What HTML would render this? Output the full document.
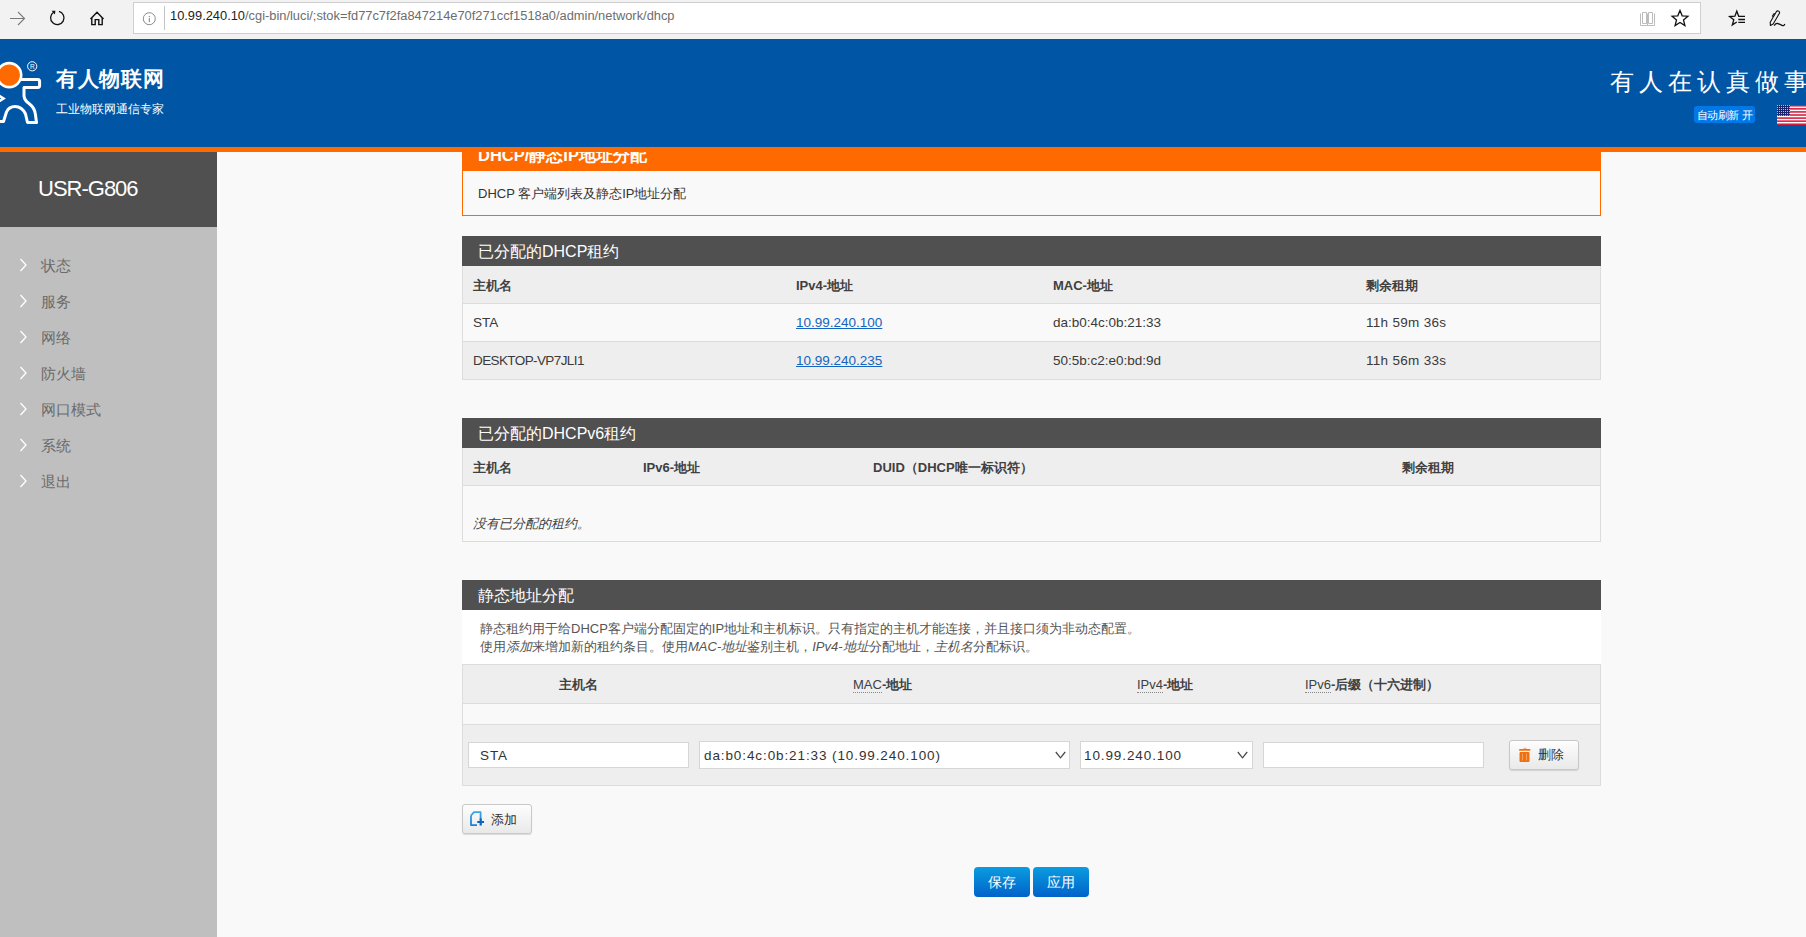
<!DOCTYPE html>
<html><head><meta charset="utf-8">
<style>
*{box-sizing:border-box}
html,body{margin:0;padding:0;width:1806px;height:937px;overflow:hidden;background:#f9f9f9;font-family:"Liberation Sans",sans-serif;color:#404040}
.a{position:absolute}
#tb{z-index:10;left:0;top:0;width:1806px;height:39px;background:#f2f2f2}
#addr{z-index:11;left:133px;top:2px;width:1568px;height:32px;background:#fff;border:1px solid #cfcfcf}
#url{z-index:12;left:170px;top:7.5px;font-size:12.85px;color:#6d6d6d;white-space:nowrap;line-height:15px}
#url b{font-weight:normal;color:#222}
#hdr{z-index:10;left:0;top:39px;width:1806px;height:108px;background:#0055a5}
#oline{z-index:10;left:0;top:147px;width:1806px;height:5px;background:#ff6a00}
#side1{left:0;top:152px;width:217px;height:75px;background:#505050}
#side2{left:0;top:227px;width:217px;height:710px;background:#bfbfbf}
.mi{left:41px;font-size:15px;color:#6b6b6b;line-height:18px;white-space:nowrap;margin-top:1px}
.chev{left:19px;width:8px;height:13px}
.bar{left:462px;width:1139px;height:30px;background:#505050;color:#fff;font-size:16px;line-height:32px;padding-left:16px;white-space:nowrap}
.th{background:#eeeeee}
.cell{font-size:13px;line-height:16px;white-space:nowrap}
.bold{font-weight:bold;color:#404040}
.r{font-size:13.5px;color:#3a3a3a}
.val{font-size:13.5px;letter-spacing:0.9px;color:#333}
.lnk{color:#1565c0;text-decoration:underline}
.hl{background:#dcdcdc}
.inp{background:#fff;border:1px solid #d6d6d6}
.btn{border:1px solid #c8c8c8;border-radius:3px;background:linear-gradient(#fdfdfd,#e9e9e9);box-shadow:0 1px 1px rgba(0,0,0,.12)}
.bbtn{border-radius:4px;background:linear-gradient(#0b9ce0,#0062c9);color:#fff;font-size:14px;line-height:30px;text-align:center}
</style></head><body>
<!-- toolbar -->
<div id="tb" class="a"></div>
<div id="addr" class="a"></div>
<svg class="a" style="left:0;top:0;z-index:12" width="133" height="39" viewBox="0 0 133 39">
<g fill="none" stroke="#7a7a7a" stroke-width="1.1"><path d="M10 18.5H24.5M18 12L24.5 18.5L18 25"/></g>
<g fill="none" stroke="#111" stroke-width="1.3"><path d="M53.6 12.3A6.7 6.7 0 1 0 59 11.4"/></g>
<path d="M51.6 10.8L55.4 10.8L54.9 14.6Z" fill="#111"/>
<g fill="none" stroke="#111" stroke-width="1.4" stroke-linejoin="miter"><path d="M90.5 19L97 12.2L103.5 19M91.8 17.8V24.6H95.2V19.6H98.8V24.6H102.2V17.8"/></g>
<circle cx="149.3" cy="18.7" r="6" fill="none" stroke="#888" stroke-width="1"/>
</svg>
<svg class="a" style="left:140px;top:3px;z-index:12" width="30" height="32"><circle cx="9.3" cy="15.7" r="6" fill="none" stroke="#8a8a8a" stroke-width="1"/><rect x="8.8" y="15" width="1.1" height="4.2" fill="#8a8a8a"/><rect x="8.8" y="12.9" width="1.1" height="1.2" fill="#8a8a8a"/><rect x="24" y="3" width="1" height="24" fill="#c4c4c4"/></svg>
<svg class="a" style="left:1630px;top:0;z-index:12" width="176" height="39">
<g fill="none" stroke="#bcbcbc" stroke-width="1"><path d="M10.5 13.5V25.5H24.5V13.5 M17.5 13.5V25.5 M12.5 12.5H16.5V23.5H12.5Z M18.5 12.5H22.5V23.5H18.5Z"/></g>
<path d="M50.0 10.5 L52.2 15.8 L57.9 16.2 L53.5 19.9 L54.9 25.5 L50.0 22.5 L45.1 25.5 L46.5 19.9 L42.1 16.2 L47.8 15.8Z" fill="none" stroke="#111" stroke-width="1.3" stroke-linejoin="miter"/>
<path d="M108.2 16.2 L108.7 16.2 M108.7 16.2 L106.8 11.2 L104.9 16.2 L99.6 16.5 L103.8 19.8 L102.3 24.9 L106.8 22.0" fill="none" stroke="#111" stroke-width="1.3" stroke-linejoin="miter"/>
<path d="M108.3 16.3H115M108.3 19.5H115M108.3 22.4H115" stroke="#111" stroke-width="1.3"/>
<g transform="translate(140.4 25.4) rotate(30)" fill="none" stroke="#111" stroke-width="1.1" stroke-linejoin="round">
<path d="M0 0L-1.7 -2.6V-14.8A1.7 1.7 0 0 1 1.7 -14.8V-2.6Z"/><path d="M-1.7 -12.5L-2.8 -11.8V-8.5"/>
</g>
<path d="M144.2 25.6Q146 22.8 148 23.6T152 25.4T154.8 24" fill="none" stroke="#111" stroke-width="1.2"/>
</svg>
<div id="url" class="a"><b>10.99.240.10</b>/cgi-bin/luci/;stok=fd77c7f2fa847214e70f271ccf1518a0/admin/network/dhcp</div>

<!-- header -->
<div id="hdr" class="a"></div>
<div id="oline" class="a"></div>
<svg class="a" style="left:0;top:55px;z-index:12" width="45" height="75" viewBox="0 55 45 75">
<path d="M20 79.6H37.8Q39.6 79.8 39.6 81.6V85.8Q39.6 87.4 38 87.4H24V96Q24.5 100.5 29 103.5Q35 108 35.5 115L36.5 122.5H27.5L25.5 114Q22 106.5 15 106.5Q9 106.5 6.5 112L3.5 121.5H-3" fill="none" stroke="#fff" stroke-width="3" stroke-linejoin="round"/>
<circle cx="9.2" cy="75.1" r="12" fill="#ff6a00" stroke="#fff" stroke-width="2.6"/>
<path d="M-2 95L3.5 98.5L-2 102" fill="none" stroke="#fff" stroke-width="2.6"/>
<circle cx="32.2" cy="66.3" r="4.6" fill="none" stroke="#fff" stroke-width="1"/>
<text x="32.3" y="68.6" font-size="6.5" fill="#fff" text-anchor="middle" font-family="Liberation Sans">R</text>
</svg>
<div class="a" style="left:56px;top:67px;z-index:12;font-size:21px;font-weight:bold;color:#fff;line-height:24px;white-space:nowrap;letter-spacing:0.7px">有人物联网</div>
<div class="a" style="left:56px;top:101px;z-index:12;font-size:11.8px;color:#fff;line-height:16px;white-space:nowrap;letter-spacing:0px">工业物联网通信专家</div>
<div class="a" style="left:1610px;top:68px;z-index:12;font-size:24px;color:#fff;line-height:28px;white-space:nowrap;letter-spacing:5px">有人在认真做事</div>
<div class="a" style="left:1694px;top:106px;z-index:12;width:61px;height:17px;background:#0078e7;border-radius:3px;color:#fff;font-size:11px;line-height:19.5px;letter-spacing:-0.5px;text-align:center;white-space:nowrap">自动刷新 开</div>
<svg class="a" style="left:1777px;top:105px;z-index:12" width="29" height="20">
<defs><pattern id="st" width="2" height="2" patternUnits="userSpaceOnUse"><rect width="2" height="2" fill="#1c2470"/><rect width="1" height="1" fill="#b4bcdc"/></pattern></defs>
<rect width="29" height="20" fill="#fbfbfb"/><rect y="0.00" width="29" height="1.54" fill="#d61a3c"/><rect y="3.08" width="29" height="1.54" fill="#d61a3c"/><rect y="6.15" width="29" height="1.54" fill="#d61a3c"/><rect y="9.23" width="29" height="1.54" fill="#d61a3c"/><rect y="12.31" width="29" height="1.54" fill="#d61a3c"/><rect y="15.38" width="29" height="1.54" fill="#d61a3c"/><rect y="18.46" width="29" height="1.54" fill="#d61a3c"/>
<rect width="13" height="10.7" fill="url(#st)"/>
</svg>

<!-- sidebar -->
<div id="side1" class="a"></div>
<div id="side2" class="a"></div>
<div class="a" style="left:38px;top:176px;font-size:22px;color:#fff;line-height:26px;letter-spacing:-1px">USR-G806</div>
<svg class="a" style="left:19px;top:258px" width="9" height="14"><path d="M1.5 1L7 7L1.5 13" fill="none" stroke="#fff" stroke-width="1.3"/></svg>
<div class="a mi" style="top:256px">状态</div>
<svg class="a" style="left:19px;top:294px" width="9" height="14"><path d="M1.5 1L7 7L1.5 13" fill="none" stroke="#fff" stroke-width="1.3"/></svg>
<div class="a mi" style="top:292px">服务</div>
<svg class="a" style="left:19px;top:330px" width="9" height="14"><path d="M1.5 1L7 7L1.5 13" fill="none" stroke="#fff" stroke-width="1.3"/></svg>
<div class="a mi" style="top:328px">网络</div>
<svg class="a" style="left:19px;top:366px" width="9" height="14"><path d="M1.5 1L7 7L1.5 13" fill="none" stroke="#fff" stroke-width="1.3"/></svg>
<div class="a mi" style="top:364px">防火墙</div>
<svg class="a" style="left:19px;top:402px" width="9" height="14"><path d="M1.5 1L7 7L1.5 13" fill="none" stroke="#fff" stroke-width="1.3"/></svg>
<div class="a mi" style="top:400px">网口模式</div>
<svg class="a" style="left:19px;top:438px" width="9" height="14"><path d="M1.5 1L7 7L1.5 13" fill="none" stroke="#fff" stroke-width="1.3"/></svg>
<div class="a mi" style="top:436px">系统</div>
<svg class="a" style="left:19px;top:474px" width="9" height="14"><path d="M1.5 1L7 7L1.5 13" fill="none" stroke="#fff" stroke-width="1.3"/></svg>
<div class="a mi" style="top:472px">退出</div>


<!-- content -->
<div class="a" style="left:462px;top:140px;width:1139px;height:31px;background:#ff6a00"></div>
<div class="a" style="left:478px;top:144.5px;font-size:16.5px;font-weight:bold;color:#fff;line-height:20px;white-space:nowrap">DHCP/静态IP地址分配</div>
<div class="a" style="left:462px;top:171px;width:1139px;height:45px;border:1px solid #ff6a00;border-top:none"></div>
<div class="a cell" style="left:478px;top:186px;color:#333">DHCP 客户端列表及静态IP地址分配</div>

<div class="a bar" style="top:236px">已分配的DHCP租约</div>
<div class="a th" style="left:462px;top:266px;width:1139px;height:38px;border:1px solid #dcdcdc;border-top:none"></div>
<div class="a" style="left:462px;top:304px;width:1139px;height:38px;background:#f9f9f9;border:1px solid #dcdcdc;border-top:none"></div>
<div class="a th" style="left:462px;top:342px;width:1139px;height:38px;border:1px solid #dcdcdc;border-top:none"></div>
<div class="a cell bold" style="left:473px;top:278px">主机名</div>
<div class="a cell bold" style="left:796px;top:278px">IPv4-地址</div>
<div class="a cell bold" style="left:1053px;top:278px">MAC-地址</div>
<div class="a cell bold" style="left:1366px;top:278px">剩余租期</div>
<div class="a cell r" style="left:473px;top:315px">STA</div>
<div class="a cell r lnk" style="left:796px;top:315px">10.99.240.100</div>
<div class="a cell r" style="left:1053px;top:315px">da:b0:4c:0b:21:33</div>
<div class="a cell r" style="left:1366px;top:315px;letter-spacing:0.3px">11h 59m 36s</div>
<div class="a cell r" style="left:473px;top:353px;letter-spacing:-0.6px">DESKTOP-VP7JLI1</div>
<div class="a cell r lnk" style="left:796px;top:353px">10.99.240.235</div>
<div class="a cell r" style="left:1053px;top:353px">50:5b:c2:e0:bd:9d</div>
<div class="a cell r" style="left:1366px;top:353px;letter-spacing:0.3px">11h 56m 33s</div>

<div class="a bar" style="top:418px">已分配的DHCPv6租约</div>
<div class="a th" style="left:462px;top:448px;width:1139px;height:38px;border:1px solid #dcdcdc;border-top:none"></div>
<div class="a" style="left:462px;top:486px;width:1139px;height:56px;background:#f9f9f9;border:1px solid #dcdcdc;border-top:none"></div>
<div class="a cell bold" style="left:473px;top:460px">主机名</div>
<div class="a cell bold" style="left:643px;top:460px">IPv6-地址</div>
<div class="a cell bold" style="left:873px;top:460px">DUID（DHCP唯一标识符）</div>
<div class="a cell bold" style="left:1402px;top:460px">剩余租期</div>
<div class="a cell" style="left:473px;top:516px;font-style:italic">没有已分配的租约。</div>

<div class="a bar" style="top:580px">静态地址分配</div>
<div class="a" style="left:462px;top:610px;width:1139px;height:54px;background:#fff"></div>
<div class="a cell" style="left:480px;top:620px;line-height:18px;color:#555">静态租约用于给DHCP客户端分配固定的IP地址和主机标识。只有指定的主机才能连接，并且接口须为非动态配置。<br>使用<i>添加</i>来增加新的租约条目。使用<i>MAC-地址</i>鉴别主机，<i>IPv4-地址</i>分配地址，<i>主机名</i>分配标识。</div>
<div class="a th" style="left:462px;top:664px;width:1139px;height:40px;border:1px solid #dcdcdc"></div>
<div class="a" style="left:462px;top:704px;width:1139px;height:21px;background:#f9f9f9;border:1px solid #dcdcdc;border-top:none"></div>
<div class="a th" style="left:462px;top:725px;width:1139px;height:61px;border:1px solid #dcdcdc;border-top:none"></div>
<div class="a cell bold" style="left:559px;top:677px">主机名</div>
<div class="a cell" style="left:853px;top:677px"><span style="border-bottom:1px dotted #888">MAC</span><b>-地址</b></div>
<div class="a cell" style="left:1137px;top:677px"><span style="border-bottom:1px dotted #888">IPv4</span><b>-地址</b></div>
<div class="a cell" style="left:1305px;top:677px"><span style="border-bottom:1px dotted #888">IPv6</span><b>-后缀（十六进制）</b></div>

<div class="a inp" style="left:468px;top:742px;width:221px;height:26px"></div>
<div class="a cell val" style="left:480px;top:748px">STA</div>
<div class="a inp" style="left:699px;top:741px;width:371px;height:28px"></div>
<div class="a cell val" style="left:704px;top:748px">da:b0:4c:0b:21:33 (10.99.240.100)</div>
<svg class="a" style="left:1055px;top:751px" width="12" height="9"><path d="M0.8 1L5.5 6.8L10.2 1" fill="none" stroke="#444" stroke-width="1.2"/></svg>
<div class="a inp" style="left:1080px;top:741px;width:173px;height:28px"></div>
<div class="a cell val" style="left:1084px;top:748px">10.99.240.100</div>
<svg class="a" style="left:1237px;top:751px" width="12" height="9"><path d="M0.8 1L5.5 6.8L10.2 1" fill="none" stroke="#444" stroke-width="1.2"/></svg>
<div class="a inp" style="left:1263px;top:742px;width:221px;height:26px"></div>
<div class="a btn" style="left:1509px;top:740px;width:70px;height:30px"></div>
<svg class="a" style="left:1518px;top:747px" width="14" height="16">
<path d="M5 1.6Q7 0 9 1.6Z" fill="#f07010"/><rect x="1" y="2" width="11.5" height="1.8" rx="0.9" fill="#f07010"/>
<rect x="1.5" y="5" width="10" height="10" rx="1" fill="#f07010"/>
<rect x="4" y="6.5" width="1" height="7" fill="#f6a060"/><rect x="8" y="6.5" width="1" height="7" fill="#f6a060"/>
</svg>
<div class="a cell" style="left:1538px;top:747px;color:#333">删除</div>

<div class="a btn" style="left:462px;top:804px;width:70px;height:30px"></div>
<svg class="a" style="left:469px;top:810px" width="18" height="18">
<defs><linearGradient id="bg1" x1="0" y1="0" x2="0" y2="1"><stop offset="0" stop-color="#3aa6e6"/><stop offset="1" stop-color="#1a7fd6"/></linearGradient></defs>
<path d="M2 5.5L5 2.2H11.6V9 M11.6 9.5V9 M8 15.1H2V5.5" fill="none" stroke="url(#bg1)" stroke-width="1.8" stroke-linejoin="round"/>
<path d="M8.3 12H15M11.7 8.6V15.4" stroke="#0b63c4" stroke-width="2.2"/>
</svg>
<div class="a cell" style="left:491px;top:812px;color:#333">添加</div>

<div class="a bbtn" style="left:974px;top:867px;width:56px;height:30px">保存</div>
<div class="a bbtn" style="left:1033px;top:867px;width:56px;height:30px">应用</div>
</body></html>
